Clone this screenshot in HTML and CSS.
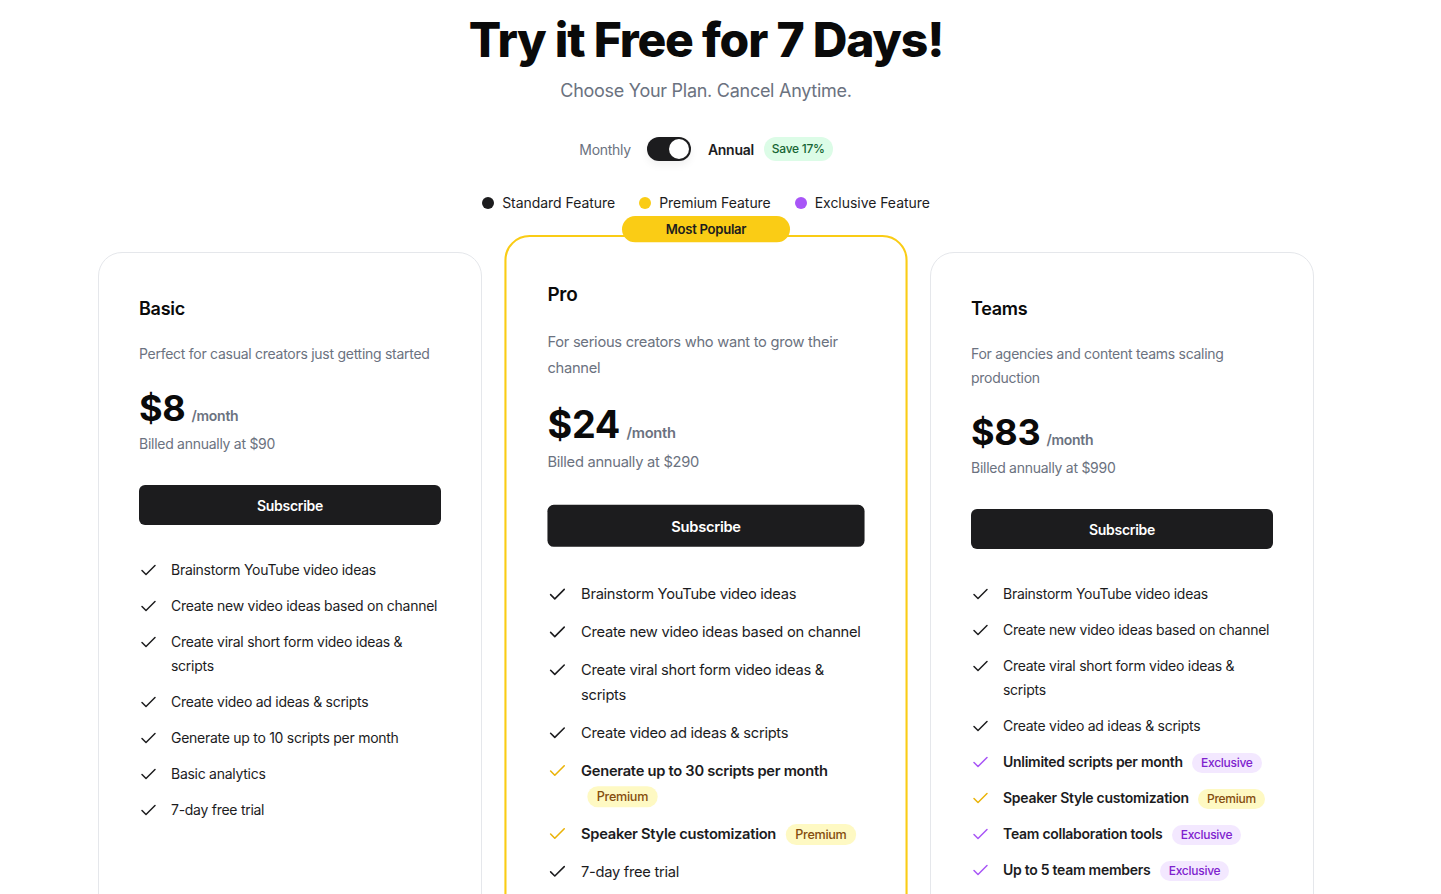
FILE: index.html
```html
<!DOCTYPE html>
<html lang="en">
<head>
    <meta charset="UTF-8">
    <meta name="viewport" content="width=device-width, initial-scale=1.0">
    <title>Pricing</title>
    <link rel="stylesheet" href="styles.css">
</head>
<body>
    <div class="page">
        <h1 class="title">Try it Free for 7 Days!</h1>
        <p class="subtitle">Choose Your Plan. Cancel Anytime.</p>

        <div class="billing">
            <span class="billing-label">Monthly</span>
            <span class="switch"><span class="knob"></span></span>
            <span class="billing-label active">Annual</span>
            <span class="save">Save 17%</span>
        </div>

        <div class="legend">
            <span class="legend-item"><span class="dot dot-standard"></span>Standard Feature</span>
            <span class="legend-item"><span class="dot dot-premium"></span>Premium Feature</span>
            <span class="legend-item"><span class="dot dot-exclusive"></span>Exclusive Feature</span>
        </div>

        <div class="plans">
            <!-- Basic -->
            <div class="plan">
                <h2 class="plan-name">Basic</h2>
                <p class="plan-desc">Perfect for casual creators just getting started</p>
                <div class="price"><span class="amount">$8</span><span class="per">/month</span></div>
                <p class="billed">Billed annually at $90</p>
                <button class="subscribe">Subscribe</button>
                <ul class="features">
                    <li><svg class="check" viewBox="0 0 18 18"><path d="M3 9.5l4 4L16 4.5"/></svg><span>Brainstorm YouTube video ideas</span></li>
                    <li><svg class="check" viewBox="0 0 18 18"><path d="M3 9.5l4 4L16 4.5"/></svg><span>Create new video ideas based on channel</span></li>
                    <li><svg class="check" viewBox="0 0 18 18"><path d="M3 9.5l4 4L16 4.5"/></svg><span>Create viral short form video ideas &amp; scripts</span></li>
                    <li><svg class="check" viewBox="0 0 18 18"><path d="M3 9.5l4 4L16 4.5"/></svg><span>Create video ad ideas &amp; scripts</span></li>
                    <li><svg class="check" viewBox="0 0 18 18"><path d="M3 9.5l4 4L16 4.5"/></svg><span>Generate up to 10 scripts per month</span></li>
                    <li><svg class="check" viewBox="0 0 18 18"><path d="M3 9.5l4 4L16 4.5"/></svg><span>Basic analytics</span></li>
                    <li><svg class="check" viewBox="0 0 18 18"><path d="M3 9.5l4 4L16 4.5"/></svg><span>7-day free trial</span></li>
                </ul>
            </div>

            <!-- Pro -->
            <div class="plan plan-popular">
                <span class="popular">Most Popular</span>
                <h2 class="plan-name">Pro</h2>
                <p class="plan-desc">For serious creators who want to grow their channel</p>
                <div class="price"><span class="amount">$24</span><span class="per">/month</span></div>
                <p class="billed">Billed annually at $290</p>
                <button class="subscribe">Subscribe</button>
                <ul class="features">
                    <li><svg class="check" viewBox="0 0 18 18"><path d="M3 9.5l4 4L16 4.5"/></svg><span>Brainstorm YouTube video ideas</span></li>
                    <li><svg class="check" viewBox="0 0 18 18"><path d="M3 9.5l4 4L16 4.5"/></svg><span>Create new video ideas based on channel</span></li>
                    <li><svg class="check" viewBox="0 0 18 18"><path d="M3 9.5l4 4L16 4.5"/></svg><span>Create viral short form video ideas &amp; scripts</span></li>
                    <li><svg class="check" viewBox="0 0 18 18"><path d="M3 9.5l4 4L16 4.5"/></svg><span>Create video ad ideas &amp; scripts</span></li>
                    <li class="premium"><svg class="check" viewBox="0 0 18 18"><path d="M3 9.5l4 4L16 4.5"/></svg><span>Generate up to 30 scripts per month <span class="tag tag-premium">Premium</span></span></li>
                    <li class="premium"><svg class="check" viewBox="0 0 18 18"><path d="M3 9.5l4 4L16 4.5"/></svg><span>Speaker Style customization <span class="tag tag-premium">Premium</span></span></li>
                    <li><svg class="check" viewBox="0 0 18 18"><path d="M3 9.5l4 4L16 4.5"/></svg><span>7-day free trial</span></li>
                </ul>
            </div>

            <!-- Teams -->
            <div class="plan">
                <h2 class="plan-name">Teams</h2>
                <p class="plan-desc">For agencies and content teams scaling production</p>
                <div class="price"><span class="amount">$83</span><span class="per">/month</span></div>
                <p class="billed">Billed annually at $990</p>
                <button class="subscribe">Subscribe</button>
                <ul class="features">
                    <li><svg class="check" viewBox="0 0 18 18"><path d="M3 9.5l4 4L16 4.5"/></svg><span>Brainstorm YouTube video ideas</span></li>
                    <li><svg class="check" viewBox="0 0 18 18"><path d="M3 9.5l4 4L16 4.5"/></svg><span>Create new video ideas based on channel</span></li>
                    <li><svg class="check" viewBox="0 0 18 18"><path d="M3 9.5l4 4L16 4.5"/></svg><span>Create viral short form video ideas &amp; scripts</span></li>
                    <li><svg class="check" viewBox="0 0 18 18"><path d="M3 9.5l4 4L16 4.5"/></svg><span>Create video ad ideas &amp; scripts</span></li>
                    <li class="exclusive"><svg class="check" viewBox="0 0 18 18"><path d="M3 9.5l4 4L16 4.5"/></svg><span>Unlimited scripts per month <span class="tag tag-exclusive">Exclusive</span></span></li>
                    <li class="premium"><svg class="check" viewBox="0 0 18 18"><path d="M3 9.5l4 4L16 4.5"/></svg><span>Speaker Style customization <span class="tag tag-premium">Premium</span></span></li>
                    <li class="exclusive"><svg class="check" viewBox="0 0 18 18"><path d="M3 9.5l4 4L16 4.5"/></svg><span>Team collaboration tools <span class="tag tag-exclusive">Exclusive</span></span></li>
                    <li class="exclusive"><svg class="check" viewBox="0 0 18 18"><path d="M3 9.5l4 4L16 4.5"/></svg><span>Up to 5 team members <span class="tag tag-exclusive">Exclusive</span></span></li>
                </ul>
            </div>
        </div>
    </div>
</body>
</html>
```

FILE: styles.css
```css
* {
    box-sizing: border-box;
}

body {
    margin: 0;
    font-family: Inter, "Noto Sans", Arial, sans-serif;
    letter-spacing: -0.017em;
    color: #1c1c1e;
    background: #ffffff;
}

.page {
    max-width: 1412px;
    padding-top: 16px;
    display: flex;
    flex-direction: column;
    align-items: center;
}

.title {
    margin: 0;
    font-size: 48px;
    line-height: 48px;
    font-weight: 800;
    letter-spacing: -0.025em;
    color: #0a0a0a;
}

.subtitle {
    margin: 13px 0 0;
    font-size: 18px;
    line-height: 28px;
    color: #6b7280;
}

/* Billing toggle */
.billing {
    margin-top: 30px;
    display: flex;
    align-items: center;
    height: 28px;
}

.billing-label {
    font-size: 14px;
    color: #6b7280;
}

.billing-label.active {
    color: #1c1c1e;
    font-weight: 600;
    margin-left: 17px;
}

.switch {
    margin-left: 16px;
    width: 44px;
    height: 24px;
    border-radius: 12px;
    background: #1c1c1e;
    display: flex;
    align-items: center;
    justify-content: flex-end;
    padding: 2px;
    box-shadow: 0 4px 8px rgba(0, 0, 0, 0.06);
}

.knob {
    width: 20px;
    height: 20px;
    border-radius: 50%;
    background: #ffffff;
}

.save {
    margin-left: 10px;
    padding: 3px 8px;
    font-size: 12px;
    font-weight: 500;
    line-height: 18px;
    color: #166534;
    background: #dcfce7;
    border-radius: 999px;
}

/* Legend */
.legend {
    margin-top: 30px;
    display: flex;
    gap: 24px;
    font-size: 14px;
    line-height: 20px;
    letter-spacing: -0.003em;
}

.legend-item {
    display: flex;
    align-items: center;
    gap: 8px;
}

.dot {
    width: 12px;
    height: 12px;
    border-radius: 50%;
}

.dot-standard { background: #1c1c1e; }
.dot-premium { background: #facc15; }
.dot-exclusive { background: #a855f7; }

/* Plans */
.plans {
    margin-top: 39px;
    width: 1216px;
    display: grid;
    grid-template-columns: repeat(3, 1fr);
    gap: 32px;
}

.plan {
    position: relative;
    min-height: 680px;
    padding: 42px 40px 40px;
    border: 1px solid #e5e7eb;
    border-radius: 24px;
    background: #ffffff;
}

.plan-popular {
    border: 2px solid #facc15;
    padding: 41px 39px 39px;
    transform: scale(1.05);
}

.popular {
    position: absolute;
    top: -20px;
    left: 50%;
    transform: translateX(-50%);
    width: 160px;
    height: 25px;
    line-height: 25px;
    text-align: center;
    font-size: 12.5px;
    font-weight: 600;
    background: #facc15;
    border-radius: 999px;
}

.plan-name {
    margin: 0;
    font-size: 18px;
    line-height: 28px;
    font-weight: 600;
    color: #0a0a0a;
}

.plan-desc {
    margin: 19px 0 0;
    font-size: 14px;
    line-height: 24px;
    color: #6b7280;
}

.price {
    margin-top: 22px;
    display: flex;
    align-items: baseline;
    gap: 6px;
}

.amount {
    font-size: 36px;
    line-height: 40px;
    font-weight: 700;
    color: #0a0a0a;
}

.per {
    font-size: 14px;
    font-weight: 600;
    color: #6b7280;
}

.billed {
    margin: 6px 0 0;
    font-size: 14px;
    line-height: 20px;
    color: #6b7280;
}

.subscribe {
    margin-top: 31px;
    width: 100%;
    height: 40px;
    border: none;
    border-radius: 6px;
    background: #1c1c1e;
    color: #ffffff;
    font-family: inherit;
    letter-spacing: inherit;
    font-size: 14px;
    font-weight: 600;
    cursor: pointer;
}

.features {
    list-style: none;
    margin: 33px 0 0;
    padding: 0;
    display: flex;
    flex-direction: column;
    gap: 12px;
}

.features li {
    display: flex;
    gap: 14px;
    font-size: 14px;
    line-height: 24px;
    color: #1c1c1e;
}

.check {
    flex-shrink: 0;
    width: 18px;
    height: 18px;
    margin-top: 3px;
    fill: none;
    stroke: #1c1c1e;
    stroke-width: 1.5;
    stroke-linecap: round;
    stroke-linejoin: round;
}

.features li.premium,
.features li.exclusive {
    font-weight: 600;
}

.features li.premium .check { stroke: #eab308; }
.features li.exclusive .check { stroke: #a855f7; }

.tag {
    display: inline-block;
    margin-left: 6px;
    padding: 0 9px;
    font-size: 12px;
    line-height: 20px;
    font-weight: 500;
    border-radius: 999px;
}

.tag-premium {
    background: #fef9c3;
    color: #854d0e;
}

.tag-exclusive {
    background: #f3e8ff;
    color: #7e22ce;
}
```
